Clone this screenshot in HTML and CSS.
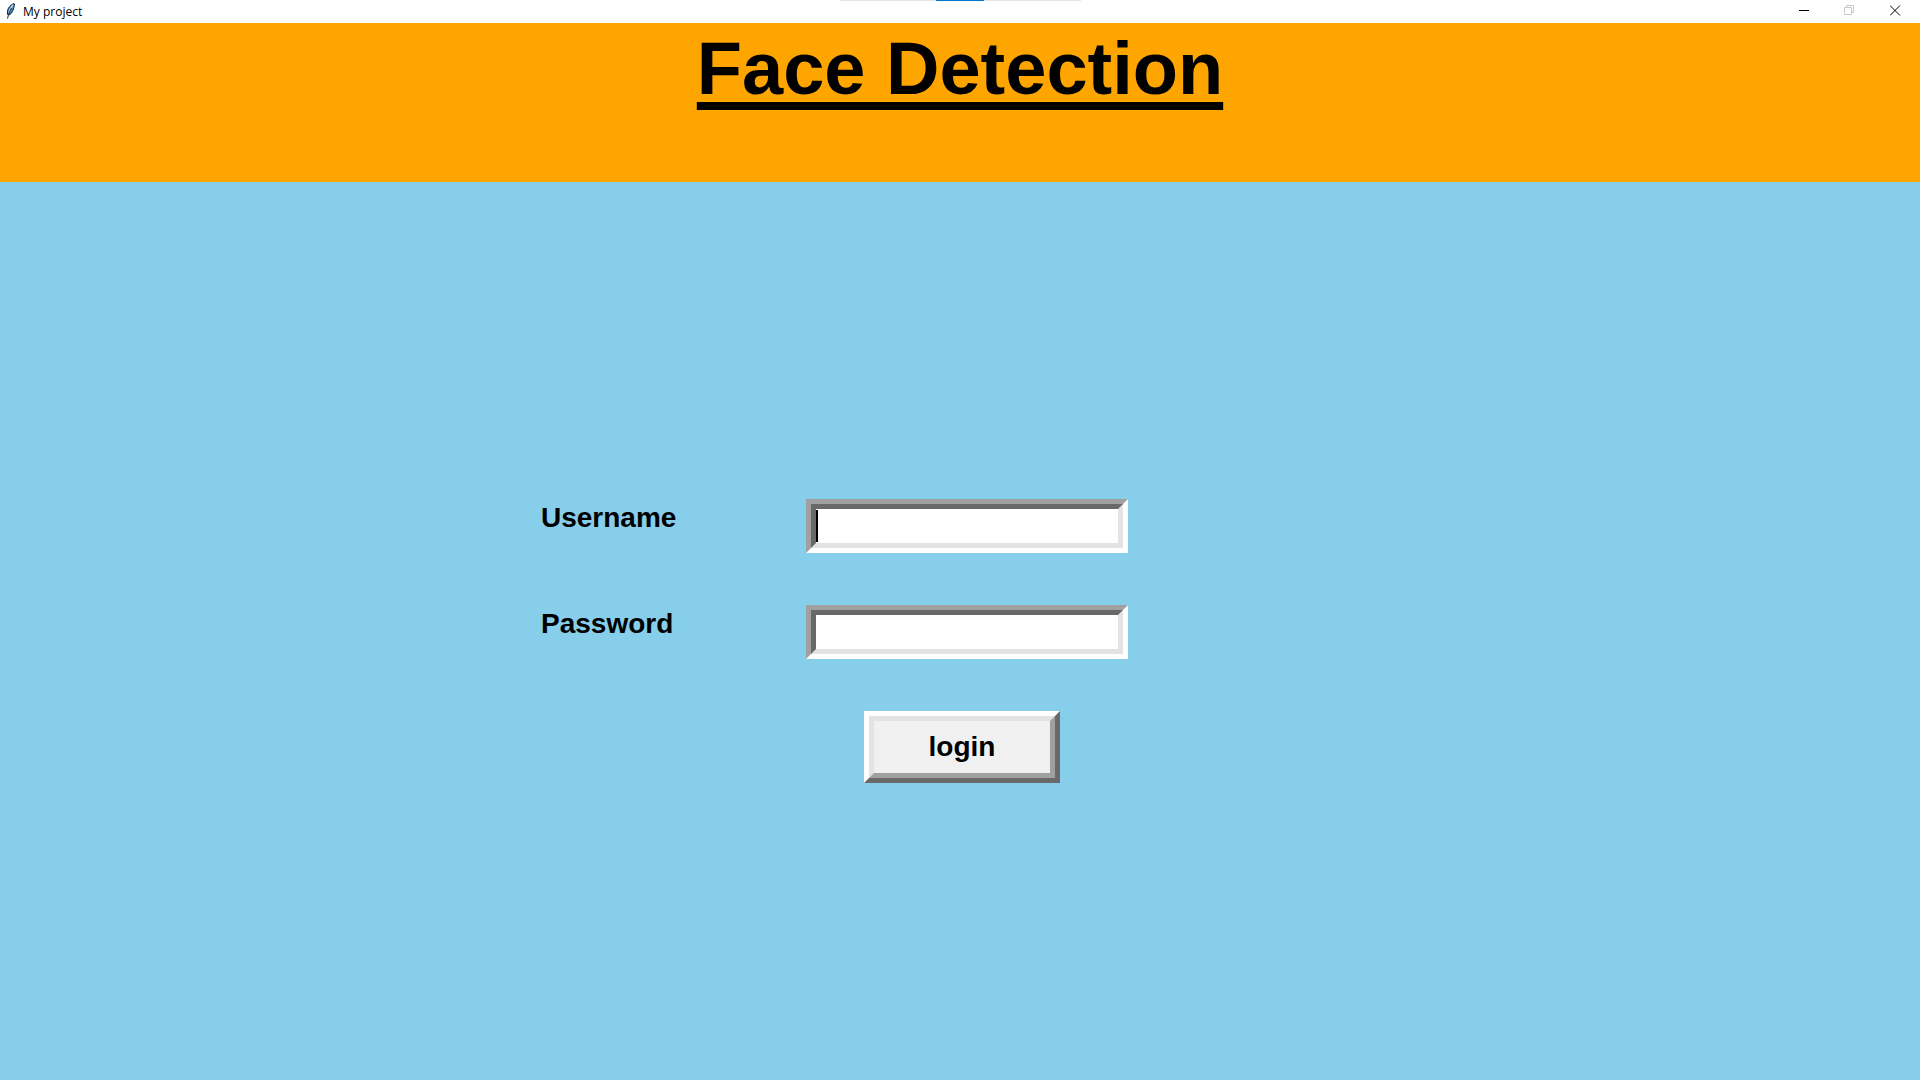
FILE: index.html
```html
<!DOCTYPE html>
<html lang="en">
<head>
<meta charset="utf-8">
<title>My project</title>
<link rel="stylesheet" href="styles.css">
</head>
<body>
<div class="titlebar">
  <svg class="feather" viewBox="0 0 16 16" aria-hidden="true">
    <path d="M11 .5C8 1.500 5 4.500 4.500 8L4.500 11.500L6.500 12C9.500 9.500 11 6 11.500 1Z" fill="#3f83cc" stroke="#1c2a3c"/>
    <path d="M10 2C8 4.500 6.500 7 5.800 10" fill="none" stroke="#b8dcf5" stroke-width="1.500"/>
    <path d="M8.500 5C6.500 8.500 5.500 11.500 4.500 15.500" fill="none" stroke="#222"/>
  </svg>
  <span class="caption">My project</span>
  <div class="snap"></div>
  <button class="wbtn" type="button" aria-label="Minimize"><svg viewBox="0 0 11 11"><path d="M1 5.500H11" /></svg></button>
  <button class="wbtn" type="button" aria-label="Restore" disabled><svg viewBox="0 0 11 11"><path d="M.5 2.500H7.500V9.500H.5ZM2.500 2.500V.5H9.500V7.500H7.500"/></svg></button>
  <button class="wbtn" type="button" aria-label="Close"><svg viewBox="0 0 11 11"><path d="M0 .5L10 10.500M10 .5L0 10.500"/></svg></button>
</div>
<header class="banner"><h1>Face Detection</h1></header>
<main>
  <form class="login">
    <label for="user">Username</label>
    <div class="field"><input class="active" id="user" type="text"></div>
    <label for="pass">Password</label>
    <div class="field"><input id="pass" type="password"></div>
    <div class="actions"><button class="submit" type="button"><span>login</span></button></div>
  </form>
</main>
</body>
</html>
```
FILE: styles.css
```css
* { box-sizing: border-box; }
body {
  margin: 0;
  min-height: 100vh;
  display: flex;
  flex-direction: column;
  background: skyblue;
  color: #000;
  font-family: "Liberation Sans", Arial, sans-serif;
}
.titlebar {
  position: relative;
  height: 23px;
  display: flex;
  align-items: center;
  padding: 0 2px 2px 3px;
  background: #fff;
}
.feather { width: 16px; height: 16px; margin-right: 4px; }
.caption {
  margin-right: auto;
  padding-top: 2px;
  font: 12px/16px "Open Sans", sans-serif;
}
.snap {
  position: absolute;
  top: 0;
  left: calc(50% - 120px);
  width: 241px;
  height: 1px;
  background: linear-gradient(#0078d7, #0078d7) 96px 0 / 48px 1px no-repeat #e5e5e5;
}
.wbtn {
  width: 46px;
  height: 21px;
  padding: 0;
  border: 0;
  background: none;
  display: flex;
  align-items: center;
  justify-content: center;
}
.wbtn svg { width: 11px; height: 11px; fill: none; stroke: #000; }
.wbtn:disabled svg { stroke: #c8c8c8; }
.banner {
  height: 159px;
  padding-top: 5px;
  background: orange;
  text-align: center;
}
h1 {
  margin: 0;
  font-size: 74px;
  line-height: 82px;
  text-decoration: underline 8px;
  text-underline-offset: 8px;
  text-decoration-skip-ink: none;
}
main {
  flex: 1;
  display: flex;
  align-items: center;
  justify-content: center;
  padding-top: 20px;
}
.login {
  display: grid;
  grid-template-columns: 265px 322px 251px;
  row-gap: 52px;
}
.login label {
  grid-column: 1;
  padding-top: 3px;
  font-size: 28px;
  line-height: 32px;
  font-weight: bold;
}
.field {
  grid-column: 2;
  height: 54px;
  border: 5px solid;
  border-color: #a0a0a0 #fff #fff #a0a0a0;
}
.field input {
  display: block;
  width: 100%;
  height: 100%;
  padding: 0 2px;
  border: 5px solid;
  border-color: #696969 #e3e3e3 #e3e3e3 #696969;
  border-radius: 0;
  outline: 0;
  background: #fff;
  font: bold 28px "Liberation Sans", Arial, sans-serif;
}
.field .active { background: linear-gradient(#000, #000) 0 1px / 2px 32px no-repeat #fff; }
.actions {
  grid-column: 2;
  padding-right: 10px;
  display: flex;
  justify-content: center;
}
.submit {
  width: 196px;
  height: 72px;
  padding: 0;
  border: 5px solid;
  border-color: #fff #696969 #696969 #fff;
  background: #f0f0f0;
  color: #000;
  font: bold 28px/52px "Liberation Sans", Arial, sans-serif;
}
.submit span {
  display: block;
  border: 5px solid;
  border-color: #e3e3e3 #a0a0a0 #a0a0a0 #e3e3e3;
}
```
